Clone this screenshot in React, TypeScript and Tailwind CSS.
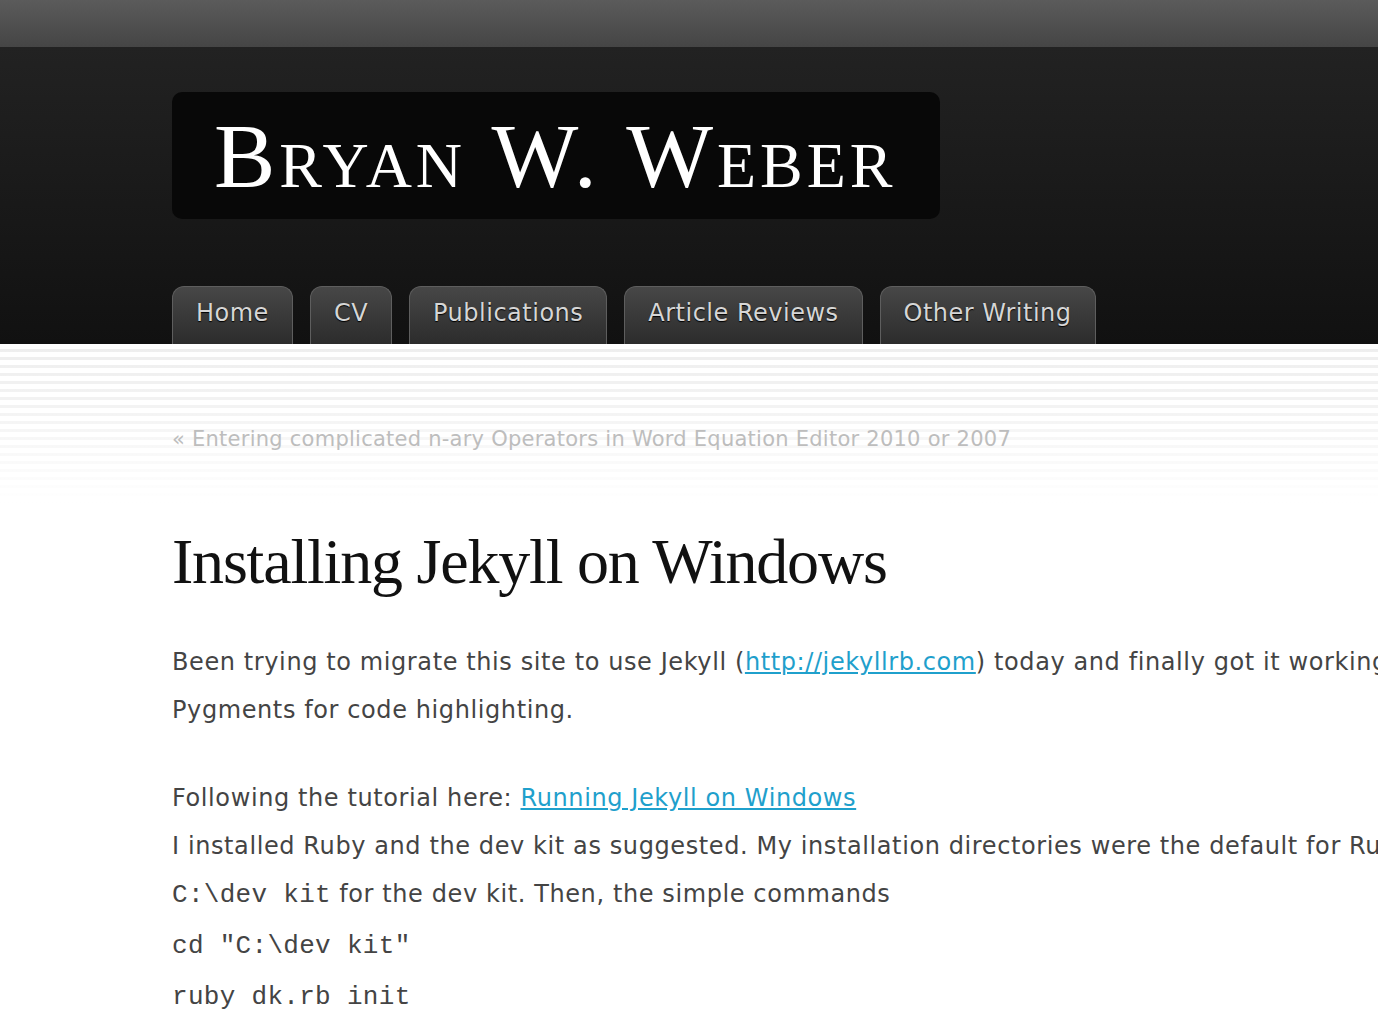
import React from 'react';

const navItems = ['Home', 'CV', 'Publications', 'Article Reviews', 'Other Writing'];

const sans = "font-['DejaVu_Sans',sans-serif]";

const App: React.FC = () => {
  return (
    <div className="min-h-[1018px] w-full overflow-hidden bg-white">
      {/* top strip */}
      <div className="h-[47px] bg-[linear-gradient(to_bottom,#5b5b5b,#454545)]" />

      {/* header */}
      <div className="h-[297px] bg-[linear-gradient(to_bottom,#222222,#111111)] pl-[172px] pt-[45px] flex flex-col">
        <div className="w-[768px] h-[127px] rounded-[10px] bg-[#080808] flex items-center pl-[42px]">
          <h1 className="font-['Liberation_Serif',serif] text-[92px] leading-none text-white [font-variant:small-caps] tracking-[4px]">
            Bryan W. Weber
          </h1>
        </div>

        <nav className="mt-auto flex gap-[17px]">
          {navItems.map((item) => (
            <div
              key={item}
              className={`${sans} h-[58px] px-[23px] rounded-t-[12px] border border-b-0 border-[#5e5e5e] bg-[linear-gradient(to_bottom,#474747,#2c2c2c)] text-[#d6d6d6] text-[24px] tracking-[0.5px] leading-[52px] [text-shadow:0_1px_1px_#000]`}
            >
              {item}
            </div>
          ))}
        </nav>
      </div>

      {/* striped band */}
      <div className="h-[160px] bg-[linear-gradient(to_bottom,rgba(255,255,255,0)_0%,rgba(255,255,255,0.3)_40%,#ffffff_100%),repeating-linear-gradient(to_bottom,#ffffff_0px,#ffffff_5px,#eeeeee_5px,#eeeeee_8px)] pl-[172px] pt-[80px]">
        <a className={`${sans} text-[21px] tracking-[0.25px] text-[#bdbdbd]`}>
          « Entering complicated n-ary Operators in Word Equation Editor 2010 or 2007
        </a>
      </div>

      {/* article */}
      <div className="pl-[172px] w-[1500px]">
        <h2 className="font-['Liberation_Serif',serif] text-[64px] leading-none text-[#111] tracking-[-1.2px] mt-[26px]">
          Installing Jekyll on Windows
        </h2>

        <div className={`${sans} text-[24px] tracking-[0.6px] leading-[48px] text-[#444] mt-[44px]`}>
          <p>
            Been trying to migrate this site to use Jekyll (
            <a className="text-[#1fa0cc] underline">http://jekyllrb.com</a>) today and finally got it working with
            <br />
            Pygments for code highlighting.
          </p>
          <p className="mt-[40px]">
            Following the tutorial here:{' '}
            <a className="text-[#1fa0cc] underline">Running Jekyll on Windows</a>
            <br />
            I installed Ruby and the dev kit as suggested. My installation directories were the default for Ruby and
            <br />
            <code className="font-['Liberation_Mono',monospace] text-[26px] tracking-[0.3px]">C:\dev kit</code> for the dev kit. Then, the simple commands
          </p>
          <div className="font-['Liberation_Mono',monospace] text-[26px] tracking-[0.3px] leading-[51px] mt-[2px]">
            <div>cd "C:\dev kit"</div>
            <div>ruby dk.rb init</div>
          </div>
        </div>
      </div>
    </div>
  );
};

export default App;
